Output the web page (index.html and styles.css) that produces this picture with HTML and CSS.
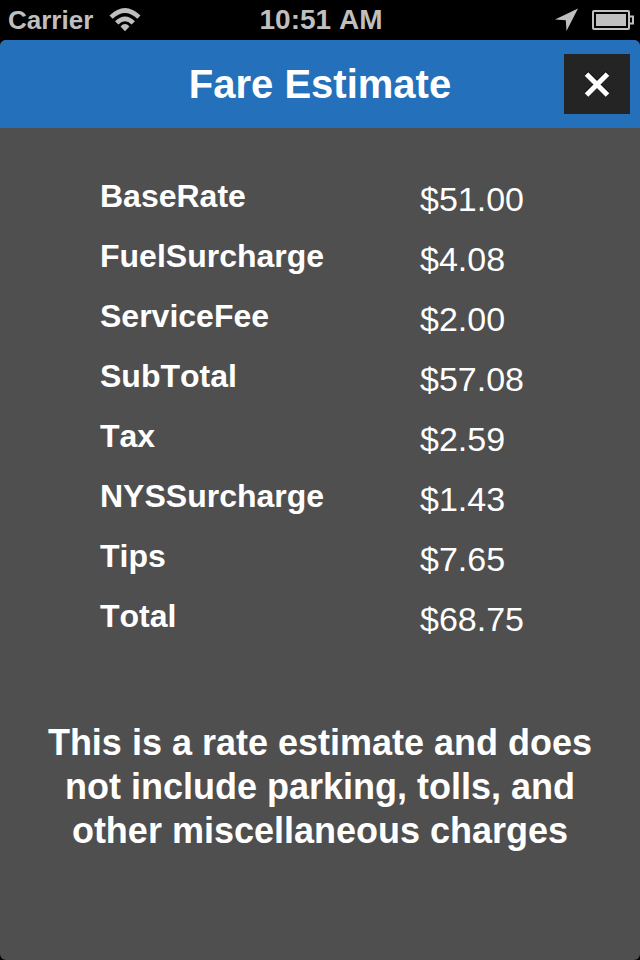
FILE: index.html
```html
<!DOCTYPE html>
<html lang="en">
<head>
<meta charset="utf-8">
<meta name="viewport" content="width=device-width, initial-scale=1">
<title>Fare Estimate</title>
<link rel="stylesheet" href="styles.css">
</head>
<body>
<div class="status-bar">
  <div class="status-left">
    <span class="carrier">Carrier</span>
    <svg class="wifi" width="32" height="24" viewBox="0 0 32 24" aria-hidden="true">
      <path d="M0.5 7.5 Q16 -7.5 31.5 7.5 L28.3 10.8 Q16 -0.6 3.7 10.8 Z"/>
      <path d="M6 13.2 Q16 3.8 26 13.2 L22.6 16.5 Q16 10.2 9.4 16.5 Z"/>
      <path d="M11.5 18.4 Q16 13.6 20.5 18.4 L16 23.3 Z"/>
    </svg>
  </div>
  <time class="clock">10:51 AM</time>
  <div class="status-right">
    <svg class="location" width="24" height="24" viewBox="0 0 24 24" aria-hidden="true">
      <path d="M23 0.5 L11.5 23 L10.8 12.3 L0 11.5 Z"/>
    </svg>
    <svg class="battery" width="42" height="20" viewBox="0 0 42 20" aria-hidden="true">
      <rect class="line" x="1" y="1" width="36" height="18" rx="1"/>
      <rect x="4" y="4" width="30" height="12"/>
      <path class="line" d="M38 6.5 H41 V13.5 H38"/>
    </svg>
  </div>
</div>
<main class="screen">
  <header class="title-bar">
    <h1>Fare Estimate</h1>
    <button class="close" type="button" aria-label="Close">
      <svg width="28" height="28" viewBox="0 0 28 28" aria-hidden="true">
        <path class="shade" d="M3.5 3 L24.5 24 M24.5 3 L3.5 24"/>
        <path class="cross" d="M3.5 4 L24.5 25 M24.5 4 L3.5 25"/>
      </svg>
    </button>
  </header>
  <table class="fares">
    <tbody>
      <tr><th scope="row">BaseRate</th><td>$51.00</td></tr>
      <tr><th scope="row">FuelSurcharge</th><td>$4.08</td></tr>
      <tr><th scope="row">ServiceFee</th><td>$2.00</td></tr>
      <tr><th scope="row">SubTotal</th><td>$57.08</td></tr>
      <tr><th scope="row">Tax</th><td>$2.59</td></tr>
      <tr><th scope="row">NYSSurcharge</th><td>$1.43</td></tr>
      <tr><th scope="row">Tips</th><td>$7.65</td></tr>
      <tr><th scope="row">Total</th><td>$68.75</td></tr>
    </tbody>
  </table>
  <p class="note">This is a rate estimate and does not include parking, tolls, and other miscellaneous charges</p>
</main>
</body>
</html>
```
FILE: styles.css
```css
* {
  box-sizing: border-box;
}

body {
  margin: 0;
  min-height: 100vh;
  display: flex;
  flex-direction: column;
  background: #000;
  color: #fff;
  font-family: "Liberation Sans", Arial, sans-serif;
  font-kerning: none;
}

.status-bar {
  display: grid;
  grid-template-columns: 1fr auto 1fr;
  align-items: center;
  height: 40px;
  padding: 0 6px 0 8px;
  color: #bfbfbf;
  font-size: 26px;
  font-weight: bold;
}

.status-bar svg {
  display: block;
  fill: #bfbfbf;
}

.status-bar .line {
  fill: none;
  stroke: #bfbfbf;
  stroke-width: 2;
}

.status-left,
.status-right {
  display: flex;
  align-items: center;
  gap: 16px;
}

.status-right {
  justify-content: flex-end;
  gap: 13px;
}

.clock {
  font-size: 28px;
}

.screen {
  flex: 1;
  background: #4f4f4f;
  border-radius: 6px;
  overflow: hidden;
}

.title-bar {
  display: grid;
  grid-template-columns: 1fr auto 1fr;
  align-items: center;
  height: 88px;
  padding: 0 10px;
  background: #2470bb;
}

h1 {
  grid-column: 2;
  margin: 0;
  font-size: 40px;
  line-height: 48px;
}

.close {
  display: flex;
  align-items: center;
  justify-content: center;
  justify-self: end;
  width: 66px;
  height: 60px;
  padding: 0;
  border: 0;
  background: #242424;
  cursor: pointer;
}

.close path {
  fill: none;
  stroke-width: 5;
}

.shade {
  stroke: #000;
}

.cross {
  stroke: #fff;
}

.fares {
  width: 100%;
  margin-top: 48px;
  border-collapse: collapse;
  table-layout: fixed;
}

.fares tr {
  height: 60px;
}

.fares th,
.fares td {
  padding: 0 0 0 100px;
  text-align: left;
  vertical-align: top;
}

.fares th {
  font-size: 32px;
  line-height: 40px;
}

.fares td {
  font-size: 34px;
  line-height: 46px;
}

.note {
  margin: 65px 40px;
  font-size: 36px;
  font-weight: bold;
  line-height: 44px;
  text-align: center;
}
```
